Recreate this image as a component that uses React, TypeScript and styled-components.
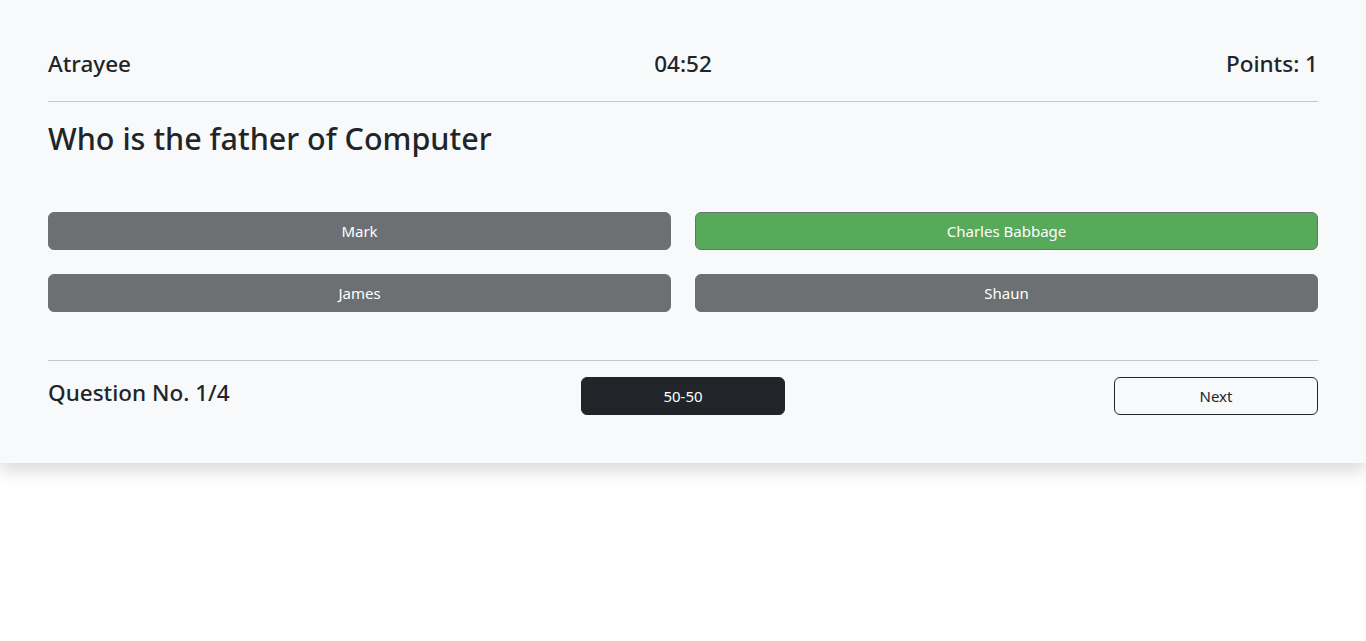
import React from 'react'
import styled, { createGlobalStyle } from 'styled-components'

//#region styled components
const GlobalStyle = createGlobalStyle`
  * { box-sizing: border-box; }
  body {
    margin: 0;
    background: #fff;
    color: #212529;
    font-family: 'Noto Sans', 'Open Sans', sans-serif;
  }
`

const Page = styled('div')`
  min-height: 100vh;
  background: #fff;
`

const QuizCard = styled('div')`
  background-color: #f8f9fa;
  padding: 48px;
  box-shadow: 0 8px 16px rgba(0, 0, 0, 0.15);
`

const ThreeCols = styled('div')`
  display: grid;
  grid-template-columns: 1fr 1fr 1fr;
  align-items: start;
`

const Heading = styled('h4')<{ align?: string }>`
  margin: 0 0 8px;
  padding-top: 2px;
  height: 28.8px;
  font-size: 22.5px;
  font-weight: 500;
  line-height: 28.8px;
  text-align: ${(p) => p.align || 'left'};
`

const Rule = styled('hr')`
  margin: 16px 0;
  border: 0;
  border-top: 1px solid #c5c7c9;
`

const Question = styled('h2')`
  margin: 0 0 56px;
  padding-top: 1px;
  height: 38.4px;
  font-size: 30.5px;
  font-weight: 500;
  line-height: 38.4px;
`

const OptionsGrid = styled('div')`
  display: grid;
  grid-template-columns: 1fr 1fr;
  gap: 24px;
  margin-bottom: 48px;
`

const OptionButton = styled('button')<{ correct?: boolean }>`
  height: 38px;
  border: 1px solid #6c7073;
  border-radius: 6px;
  background-color: ${(p) => (p.correct ? '#56aa59' : '#6c7073')};
  color: #fff;
  font-family: inherit;
  font-size: 15px;
  cursor: pointer;
`

const Cell = styled('div')<{ justify?: string }>`
  display: flex;
  justify-content: ${(p) => p.justify || 'flex-start'};
`

const ActionButton = styled('button')<{ dark?: boolean }>`
  width: 204px;
  height: 38px;
  border: 1px solid #212529;
  border-radius: 6px;
  background-color: ${(p) => (p.dark ? '#212529' : 'transparent')};
  color: ${(p) => (p.dark ? '#fff' : '#212529')};
  font-family: inherit;
  font-size: 15px;
  cursor: pointer;
`
//#endregion

const options = ['Mark', 'Charles Babbage', 'James', 'Shaun']

const App = () => {
  return (
    <Page>
      <GlobalStyle />
      <QuizCard>
        <ThreeCols>
          <Heading>Atrayee</Heading>
          <Heading align="center">04:52</Heading>
          <Heading align="right">Points: 1</Heading>
        </ThreeCols>
        <Rule />
        <Question>Who is the father of Computer</Question>
        <OptionsGrid>
          {options.map((o) => (
            <OptionButton key={o} correct={o === 'Charles Babbage'}>
              {o}
            </OptionButton>
          ))}
        </OptionsGrid>
        <Rule />
        <ThreeCols>
          <Heading>Question No. 1/4</Heading>
          <Cell justify="center">
            <ActionButton dark>50-50</ActionButton>
          </Cell>
          <Cell justify="flex-end">
            <ActionButton>Next</ActionButton>
          </Cell>
        </ThreeCols>
      </QuizCard>
    </Page>
  )
}

export default App
